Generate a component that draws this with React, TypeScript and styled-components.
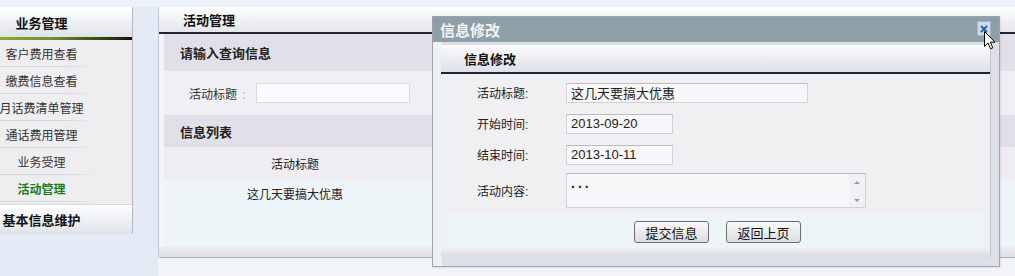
import React from "react";
import styled, { createGlobalStyle } from "styled-components";

const GlobalStyle = createGlobalStyle`
  html, body {
    margin: 0;
    padding: 0;
  }

  body {
    width: 1015px;
    height: 276px;
    overflow: hidden;
    font-family: "Liberation Sans", "Noto Sans CJK SC", sans-serif;
    font-size: 12px;
    color: #222;
    background-color: #e5ebf5;
  }
`;

const Page = styled.div`
  position: relative;
  width: 1015px;
  height: 276px;
  display: flex;
  padding-top: 7px;
  box-sizing: border-box;
  background: linear-gradient(#eef2f9 0, #eef2f9 7px, #e5ebf5 7px);
`;

/* ---------- sidebar ---------- */

const Sidebar = styled.div`
  width: 133px;
  flex-shrink: 0;
  align-self: flex-start;
  overflow: hidden;
  border-right: 1px solid #b3b8c1;
  box-sizing: border-box;
  background-color: #eeeef0;
`;

const SideInner = styled.div`
  width: 189px;
  margin-left: -53px;
`;

const SideHeader = styled.div`
  height: 30px;
  display: flex;
  align-items: center;
  justify-content: center;
  font-size: 13px;
  font-weight: 700;
  color: #111;
  background: linear-gradient(#ffffff, #dfe3e9);
`;

const GreenLine = styled.div`
  height: 3px;
  background: linear-gradient(to right, #9cc23c 0%, #6f9426 55%, #0b0f05 100%);
`;

const SideItem = styled.div<{ $active?: boolean }>`
  height: 27px;
  display: flex;
  align-items: center;
  justify-content: center;
  font-size: 12px;
  font-weight: ${(p) => (p.$active ? 700 : 400)};
  color: ${(p) => (p.$active ? "#1d7a1d" : "#333")};
  white-space: nowrap;
  background: linear-gradient(to right, #d6d6d9 0%, #d6d6d9 62%, rgba(214, 214, 217, 0) 80%)
    bottom / 100% 1px no-repeat;
`;

const SideGroup = styled.div`
  height: 29px;
  margin-top: 2px;
  display: flex;
  align-items: center;
  justify-content: center;
  font-size: 13px;
  font-weight: 700;
  color: #111;
  border-top: 1px solid #d4d7dd;
  background: linear-gradient(#ffffff, #dfe3e9);
`;

/* ---------- main panel ---------- */

const MainColumn = styled.div`
  flex: 1;
  margin-left: 25px;
  display: flex;
  flex-direction: column;
  min-width: 0;
`;

const Panel = styled.div`
  height: 251px;
  display: flex;
  flex-direction: column;
  border-left: 1px solid #c3c7cf;
  border-radius: 3px 0 0 3px;
  background-color: #f5f5f7;
  overflow: hidden;
`;

const PanelHeader = styled.div`
  height: 25px;
  flex-shrink: 0;
  display: flex;
  align-items: center;
  padding-left: 24px;
  font-size: 13px;
  font-weight: 700;
  color: #111;
  border-bottom: 2px solid #1d2733;
  background: linear-gradient(#fefefe, #e3e6eb);
`;

const PanelBody = styled.div`
  flex: 1;
  display: flex;
  flex-direction: column;
  padding-left: 5px;
`;

const SectionTitle = styled.div<{ $h: number }>`
  height: ${(p) => p.$h}px;
  flex-shrink: 0;
  display: flex;
  align-items: center;
  padding-left: 16px;
  font-size: 13px;
  font-weight: 700;
  color: #222;
  background-color: #e1e0e8;
`;

const QueryRow = styled.div`
  height: 44px;
  flex-shrink: 0;
  display: flex;
  align-items: center;
  padding-left: 25px;
  background-color: #f0eff3;
`;

const QueryLabel = styled.span`
  font-size: 12px;
  color: #333;
  margin-right: 11px;
`;

const Colon = styled.span`
  color: #999;
  margin-left: 5px;
`;

const QueryInput = styled.div`
  width: 154px;
  height: 20px;
  box-sizing: border-box;
  border: 1px solid #dadade;
  background-color: #fbfbfd;
`;

const TableHead = styled.div`
  height: 32px;
  flex-shrink: 0;
  display: grid;
  grid-template-columns: 262px 1fr;
  align-items: center;
  background-color: #efedf1;
`;

const TableRow = styled.div`
  height: 29px;
  flex-shrink: 0;
  display: grid;
  grid-template-columns: 262px 1fr;
  align-items: center;
  background-color: #eef5f8;
`;

const Cell = styled.div`
  text-align: center;
  font-size: 12px;
  color: #222;
`;

const TableFill = styled.div`
  flex: 1;
  background-color: #eef5f8;
`;

const PanelFoot = styled.div`
  height: 10px;
  flex-shrink: 0;
  border-bottom: 1px solid #a9adb5;
  background: linear-gradient(#eceef2, #dcdfe6);
`;

const MainBottom = styled.div`
  flex: 1;
  background-color: #f3f4f8;
`;

/* ---------- dialog ---------- */

const Dialog = styled.div`
  position: absolute;
  left: 432px;
  top: 16px;
  width: 568px;
  height: 251px;
  box-sizing: border-box;
  display: flex;
  flex-direction: column;
  border: 1px solid #9ba3ab;
  background-color: #e6e9ee;
  box-shadow: 1px 1px 2px rgba(0, 0, 0, 0.08);
`;

const DialogTitle = styled.div`
  position: relative;
  height: 25px;
  flex-shrink: 0;
  display: flex;
  align-items: center;
  padding-left: 7px;
  font-size: 15px;
  font-weight: 700;
  color: #f2f5f7;
  background-color: #8f9fa7;
`;

const CloseButton = styled.div`
  position: absolute;
  right: 8px;
  top: 4px;
  width: 14px;
  height: 15px;
  box-sizing: border-box;
  border: 1px solid #9db4d6;
  background-color: #c9d9ef;
  display: flex;
  align-items: center;
  justify-content: center;
`;

const DialogBody = styled.div`
  flex: 1;
  display: flex;
  padding: 3px 8px 9px 8px;
  background: linear-gradient(to right, #eef0f3 0, #eef0f3 9px, #dde1e7 9px);
`;

const InnerPanel = styled.div`
  flex: 1;
  display: flex;
  flex-direction: column;
  border-right: 1px solid #c2c6ce;
  background-color: #f3f4f7;
`;

const InnerHeader = styled.div`
  height: 27px;
  flex-shrink: 0;
  display: flex;
  align-items: center;
  padding-left: 23px;
  font-size: 13px;
  font-weight: 700;
  color: #111;
  border-bottom: 2px solid #1d2733;
  background: linear-gradient(#fbfbfd, #dde1e8);
`;

const FormWrap = styled.div`
  padding: 0 6px 0 8px;
  background-color: #eef0f3;
`;

const FormTable = styled.div`
  padding: 3px 0 2px;
  background-color: #f0eff2;
`;

const FormRow = styled.div<{ $h?: number }>`
  height: ${(p) => p.$h ?? 31}px;
  display: flex;
  align-items: center;
`;

const FieldLabel = styled.div`
  width: 117px;
  flex-shrink: 0;
  box-sizing: border-box;
  padding-left: 28px;
  font-size: 12px;
  color: #222;
`;

const FieldInput = styled.input<{ $w: number }>`
  width: ${(p) => p.$w}px;
  height: 20px;
  box-sizing: border-box;
  margin: 0;
  padding: 0 0 0 4px;
  border: 1px solid #d2d1d6;
  border-top-color: #bdbcc2;
  background-color: #f8f7fa;
  font-family: "Liberation Sans", "Noto Sans CJK SC", sans-serif;
  font-size: 13px;
  color: #222;
  outline: none;
`;

const AreaBox = styled.div`
  width: 300px;
  height: 35px;
  box-sizing: border-box;
  display: flex;
  border: 1px solid #d2d1d6;
  border-top-color: #bdbcc2;
  background-color: #f8f7fa;
`;

const AreaText = styled.div`
  flex: 1;
  padding: 0 0 0 4px;
  font-size: 14px;
  font-weight: 700;
  line-height: 18px;
  letter-spacing: 3px;
  color: #222;
`;

const ScrollCol = styled.div`
  width: 16px;
  display: flex;
  flex-direction: column;
  justify-content: space-between;
  align-items: center;
  padding: 7px 0 5px;
  box-sizing: border-box;
  background-color: #f1f1f4;
`;

const Arrow = styled.div<{ $down?: boolean }>`
  width: 0;
  height: 0;
  border-left: 3px solid transparent;
  border-right: 3px solid transparent;
  ${(p) =>
    p.$down ? "border-top: 3px solid #9a9aa0;" : "border-bottom: 3px solid #9a9aa0;"}
`;

const ButtonBar = styled.div`
  height: 35px;
  display: flex;
  justify-content: center;
  align-items: flex-start;
  gap: 17px;
  padding: 8px 0 0 2px;
  box-sizing: border-box;
  background-color: #eef5f7;
`;

const Button = styled.button`
  width: 75px;
  height: 22px;
  margin: 0;
  padding: 0;
  border: 1px solid #6e6e6e;
  border-radius: 3px;
  background: linear-gradient(#fafafa, #dcdcdc);
  font-family: "Liberation Sans", "Noto Sans CJK SC", sans-serif;
  font-size: 13px;
  color: #111;
`;

const InnerFoot = styled.div`
  flex: 1;
  background: linear-gradient(#eef0f3, #d8dce3);
`;

const Cursor = styled.svg`
  position: absolute;
  left: 984px;
  top: 31px;
`;

const menuItems = [
  { label: "客户费用查看" },
  { label: "缴费信息查看" },
  { label: "月话费清单管理" },
  { label: "通话费用管理" },
  { label: "业务受理" },
  { label: "活动管理", active: true },
];

const App = () => {
  return (
    <Page>
      <GlobalStyle />
      <Sidebar>
        <SideInner>
          <SideHeader>业务管理</SideHeader>
          <GreenLine />
          {menuItems.map((item) => (
            <SideItem key={item.label} $active={item.active}>
              {item.label}
            </SideItem>
          ))}
          <SideGroup>基本信息维护</SideGroup>
        </SideInner>
      </Sidebar>

      <MainColumn>
        <Panel>
          <PanelHeader>活动管理</PanelHeader>
          <PanelBody>
            <SectionTitle $h={37}>请输入查询信息</SectionTitle>
            <QueryRow>
              <QueryLabel>
                活动标题<Colon>:</Colon>
              </QueryLabel>
              <QueryInput />
            </QueryRow>
            <SectionTitle $h={32}>信息列表</SectionTitle>
            <TableHead>
              <Cell>活动标题</Cell>
              <Cell />
            </TableHead>
            <TableRow>
              <Cell>这几天要搞大优惠</Cell>
              <Cell />
            </TableRow>
            <TableFill />
          </PanelBody>
          <PanelFoot />
        </Panel>
        <MainBottom />
      </MainColumn>

      <Dialog>
        <DialogTitle>
          信息修改
          <CloseButton>
            <svg width="10" height="10" viewBox="0 0 10 10">
              <path d="M2 2 L8 8 M8 2 L2 8" stroke="#2f5b9a" strokeWidth="1.8" />
            </svg>
          </CloseButton>
        </DialogTitle>
        <DialogBody>
          <InnerPanel>
            <InnerHeader>信息修改</InnerHeader>
            <FormWrap>
              <FormTable>
                <FormRow>
                  <FieldLabel>活动标题:</FieldLabel>
                  <FieldInput $w={242} value="这几天要搞大优惠" readOnly />
                </FormRow>
                <FormRow>
                  <FieldLabel>开始时间:</FieldLabel>
                  <FieldInput $w={107} value="2013-09-20" readOnly />
                </FormRow>
                <FormRow>
                  <FieldLabel>结束时间:</FieldLabel>
                  <FieldInput $w={107} value="2013-10-11" readOnly />
                </FormRow>
                <FormRow $h={41}>
                  <FieldLabel>活动内容:</FieldLabel>
                  <AreaBox>
                    <AreaText>...</AreaText>
                    <ScrollCol>
                      <Arrow />
                      <Arrow $down />
                    </ScrollCol>
                  </AreaBox>
                </FormRow>
              </FormTable>
              <ButtonBar>
                <Button>提交信息</Button>
                <Button>返回上页</Button>
              </ButtonBar>
            </FormWrap>
            <InnerFoot />
          </InnerPanel>
        </DialogBody>
      </Dialog>

      <Cursor width="12" height="20" viewBox="0 0 12 20">
        <path
          d="M0.5 0.5 L0.5 15.5 L4 12 L6.5 17.8 L8.8 16.8 L6.3 11.2 L11 11.2 Z"
          fill="#ffffff"
          stroke="#000000"
          strokeWidth="1"
          strokeLinejoin="round"
        />
      </Cursor>
    </Page>
  );
};

export default App;
